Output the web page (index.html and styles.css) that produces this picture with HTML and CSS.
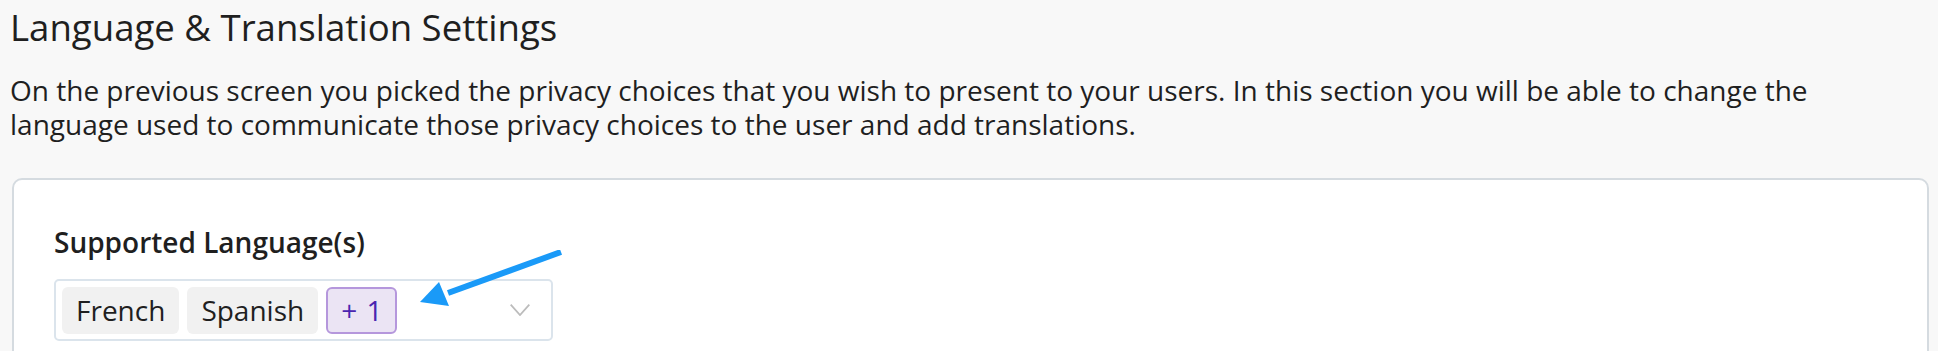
FILE: index.html
```html
<!DOCTYPE html>
<html lang="en">
<head>
<meta charset="utf-8">
<title>Language &amp; Translation Settings</title>
<link rel="stylesheet" href="styles.css">
</head>
<body>
<main class="page">
  <h1 class="title">Language &amp; Translation Settings</h1>
  <p class="intro">On the previous screen you picked the privacy choices that you wish to present to your users. In this section you will be able to change the language used to communicate those privacy choices to the user and add translations.</p>
  <section class="card">
    <div class="field">
      <label class="label">Supported Language(s)</label>
      <div class="select">
        <div class="chips">
          <span class="chip">French</span>
          <span class="chip">Spanish</span>
          <span class="chip chip-more">+ 1</span>
        </div>
        <svg class="chevron" width="20" height="12" viewBox="0 0 20 12"><path d="M0.7 0.7 L10 11 L19.3 0.7" fill="none" stroke="#bcbcbc" stroke-width="1.8"/></svg>
      </div>
      <svg class="pointer" width="150" height="60" viewBox="0 0 150 60"><line x1="141" y1="2" x2="28" y2="43" stroke="#1a9af8" stroke-width="6"/><polygon points="0,52 19,32 29,56" fill="#1a9af8"/></svg>
    </div>
  </section>
</main>
</body>
</html>
```
FILE: styles.css
```css
html, body {
  margin: 0;
  padding: 0;
  background: #f8f8f8;
  font-family: "Open Sans", "Noto Sans", sans-serif;
  color: #1f1f1f;
}
.page {
  padding: 2px 9px 0 10px;
}
.title {
  margin: 0;
  font-size: 36.6px;
  font-weight: 400;
  line-height: 50px;
}
.intro {
  margin: 21px 0 0;
  font-size: 28px;
  line-height: 34px;
  max-width: 1900px;
}
.card {
  margin-top: 37px;
  margin-left: 2px;
  background: #fff;
  border: 2px solid #d5dbe0;
  border-radius: 10px;
  height: 240px;
  padding: 44px 40px 0;
}
.field {
  position: relative;
  width: 520px;
}
.label {
  display: block;
  font-size: 28px;
  font-weight: 600;
  line-height: 36px;
  margin-bottom: 19px;
}
.select {
  display: flex;
  align-items: center;
  justify-content: space-between;
  width: 499px;
  height: 62px;
  box-sizing: border-box;
  border: 2px solid #dbe4ec;
  border-radius: 5px;
  padding: 0 21px 0 6px;
}
.chips {
  display: flex;
  gap: 8px;
}
.chip {
  display: inline-flex;
  align-items: center;
  height: 47px;
  box-sizing: border-box;
  padding: 0 14px;
  background: #f1f1f1;
  border-radius: 6px;
  font-size: 28px;
}
.chip-more {
  background: #ebe4f4;
  border: 2px solid #b597dc;
  color: #4a25b0;
  padding: 0 13px;
  word-spacing: 2px;
}
.pointer {
  position: absolute;
  left: 366px;
  top: 26px;
}
```
